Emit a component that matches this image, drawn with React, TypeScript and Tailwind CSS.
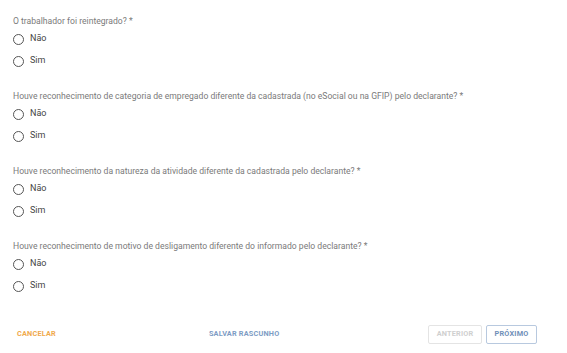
import React from "react";

const QUESTIONS = [
  "O trabalhador foi reintegrado? *",
  "Houve reconhecimento de categoria de empregado diferente da cadastrada (no eSocial ou na GFIP) pelo declarante? *",
  "Houve reconhecimento da natureza da atividade diferente da cadastrada pelo declarante? *",
  "Houve reconhecimento de motivo de desligamento diferente do informado pelo declarante? *",
];

function Radio({ label }: { label: string }) {
  return (
    <label className="flex h-[22px] items-center gap-[6px] pl-[13px]">
      <span className="h-[11px] w-[11px] rounded-full border-[1.5px] border-[#555]" />
      <span className="text-[9px] text-[#444]">{label}</span>
    </label>
  );
}

export default function App() {
  return (
    <main className="flex h-[353px] w-[567px] flex-col bg-white font-['Roboto',sans-serif]">
      <div className="flex flex-col pt-[15px]">
        {QUESTIONS.map((q) => (
          <div key={q} className="flex h-[75px] flex-col">
            <p className="pl-[13px] text-[8.6px] leading-[12px] text-[#7a7a7a]">{q}</p>
            <div className="mt-[1px] flex flex-col">
              <Radio label="Não" />
              <Radio label="Sim" />
            </div>
          </div>
        ))}
      </div>
      <div className="mt-[10px] flex items-center pl-[17px] pr-[30px]">
        <button className="text-[7.3px] font-bold tracking-[0.2px] text-[#f0a94c]">CANCELAR</button>
        <button className="ml-[153px] text-[7.3px] font-bold tracking-[0.2px] text-[#7d9cc4]">SALVAR RASCUNHO</button>
        <div className="ml-auto flex gap-[4px]">
          <button className="h-[19px] w-[54px] rounded-[2px] border border-[#e4e4e4] text-[7.3px] font-bold tracking-[0.2px] text-[#cfcfcf]">ANTERIOR</button>
          <button className="h-[19px] w-[51px] rounded-[2px] border border-[#b8c9df] text-[7.3px] font-bold tracking-[0.2px] text-[#6f8fb8]">PRÓXIMO</button>
        </div>
      </div>
    </main>
  );
}
